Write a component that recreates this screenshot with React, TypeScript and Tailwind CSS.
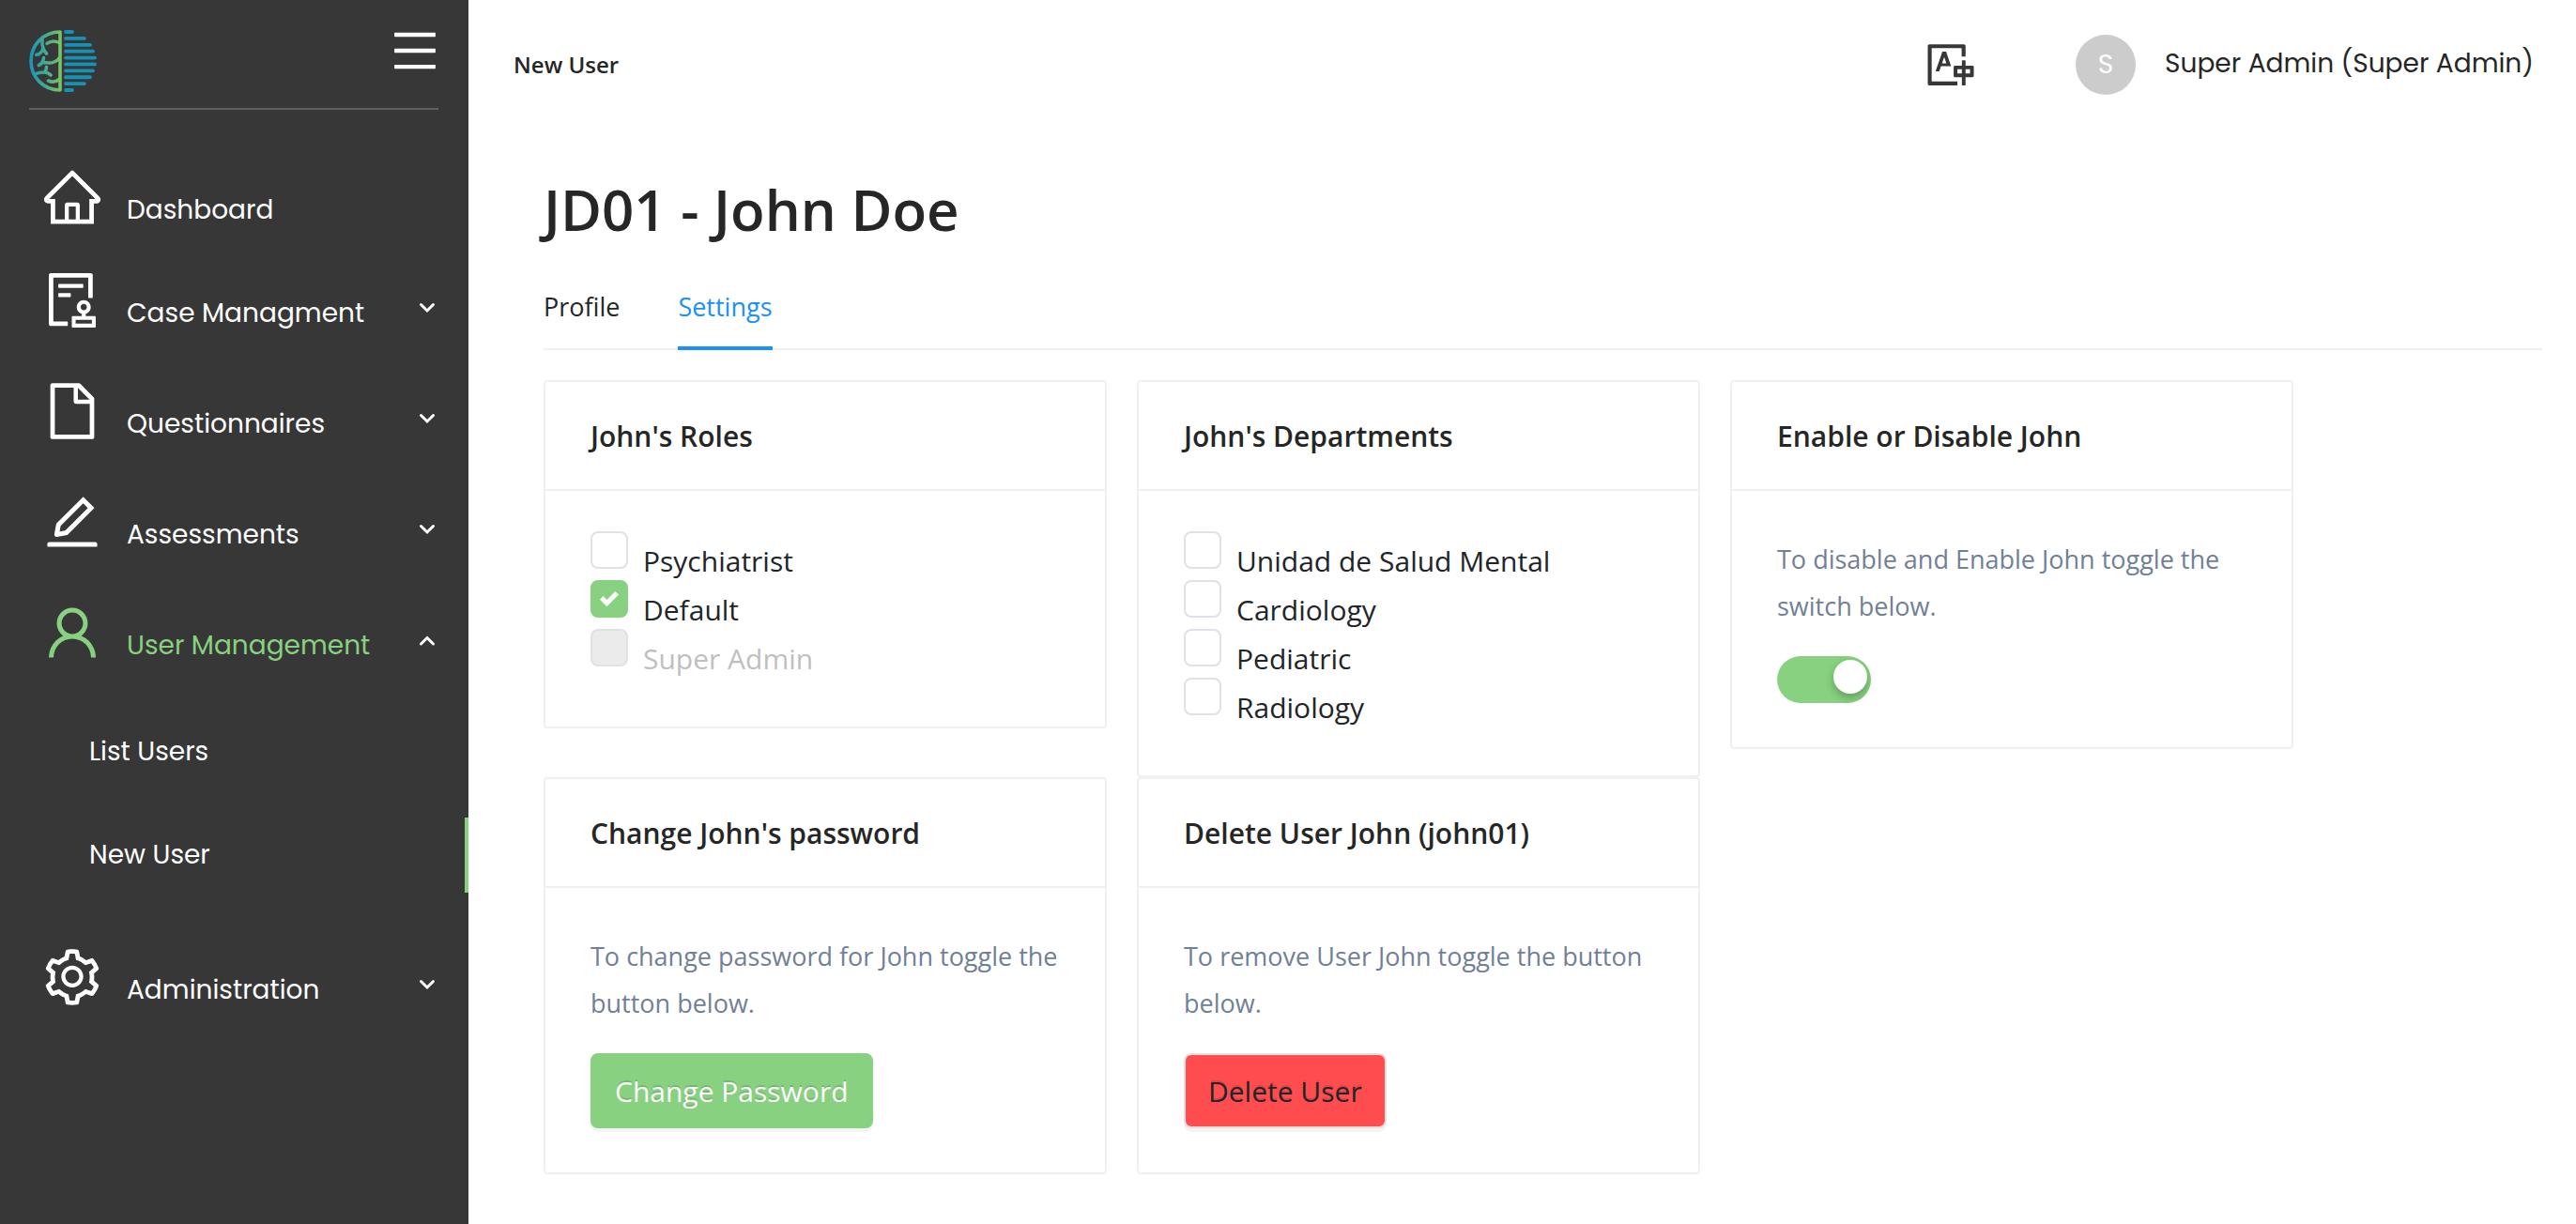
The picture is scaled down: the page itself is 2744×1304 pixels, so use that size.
import React, { useId, useState } from "react";
import {
  AiOutlineAudit,
  AiOutlineEdit,
  AiOutlineFile,
  AiOutlineHome,
  AiOutlineMenu,
  AiOutlineSetting,
  AiOutlineTranslation,
  AiOutlineUser,
} from "react-icons/ai";
import type { IconType } from "react-icons";

const LOGO_BARS = [59, 72, 78, 81, 83, 83, 81, 78, 72, 59];

function Logo() {
  return (
    <svg viewBox="11 12 72 66" className="h-[66px] w-[72px]" role="img" aria-label="Logo">
      <defs>
        <linearGradient id="brain" gradientUnits="userSpaceOnUse" x1="11" y1="0" x2="46" y2="0">
          <stop offset="0" stopColor="#1792b8" />
          <stop offset="0.5" stopColor="#44ab92" />
          <stop offset="1" stopColor="#7cc563" />
        </linearGradient>
      </defs>
      <g fill="none" stroke="url(#brain)" strokeWidth="3.6" strokeLinecap="round" strokeLinejoin="round">
        <path d="M44 14C26 14 13 28 13 45S26 76 44 76Z" />
        <path d="M25 21.5C24.5 26 25 29 26 31.5C25 35 22 38 18.8 38.4M26 31.5C27 34.500 28.500 35.500 29.500 37.200" />
        <path d="M30 26.300C34 23.500 39 23.500 43 25.500" />
        <path d="M21.300 49.500C25 48 26 46 26.500 41.500M25.500 46C32 48 39 47 43 42" />
        <path d="M17 59.500C20 57 24 57 27 57C30 57 32 58 34 60M27.500 57C29 55 29.500 53 29.500 51.300" />
        <path d="M31.500 66C36 68 40 67 43 64.500" />
      </g>
      <g stroke="#1592b5" strokeWidth="3.8" strokeLinecap="round">
        {LOGO_BARS.map((end, i) => (
          <line key={i} x1="50" x2={end - 2} y1={14 + i * 6.89} y2={14 + i * 6.89} />
        ))}
      </g>
    </svg>
  );
}

function Chevron({ up = false }: { up?: boolean }) {
  return (
    <svg
      viewBox="0 0 20 20"
      className="mb-4 ml-auto size-5"
      fill="none"
      stroke="#fff"
      strokeWidth="3"
      strokeLinecap="round"
      aria-hidden="true"
    >
      <path d={up ? "M3.500 14L10 7.500L16.500 14" : "M3.500 6.500L10 13L16.500 6.500"} />
    </svg>
  );
}

type NavItemProps = {
  icon: IconType;
  label: string;
  expandable?: boolean;
  open?: boolean;
};

function NavItem({ icon: Icon, label, expandable, open }: NavItemProps) {
  return (
    <button
      type="button"
      aria-expanded={expandable ? !!open : undefined}
      className={`flex w-full items-end pr-[34px] pl-[43px] text-left ${open ? "text-[#88d181]" : "text-white"}`}
    >
      <Icon className="size-[68px] shrink-0" />
      <span className="ml-6 leading-[40px]">{label}</span>
      {expandable && <Chevron up={open} />}
    </button>
  );
}

function Sidebar() {
  return (
    <aside className="w-[499px] shrink-0 bg-[#373737] font-[Poppins,Inter,sans-serif] text-[28px] text-white">
      <div className="mr-8 ml-[31px] flex items-start justify-between border-b-2 border-[#5f5f5f] pt-[26px] pb-[17px]">
        <div className="pt-1.5">
          <Logo />
        </div>
        <button type="button" aria-label="Toggle menu" className="-mr-[3px]">
          <AiOutlineMenu className="size-14" />
        </button>
      </div>
      <nav className="pt-[59px]">
        <ul>
          <li className="mb-[42px]">
            <NavItem icon={AiOutlineHome} label="Dashboard" />
          </li>
          <li className="mb-[50px]">
            <NavItem icon={AiOutlineAudit} label="Case Managment" expandable />
          </li>
          <li className="mb-[50px]">
            <NavItem icon={AiOutlineFile} label="Questionnaires" expandable />
          </li>
          <li className="mb-[50px]">
            <NavItem icon={AiOutlineEdit} label="Assessments" expandable />
          </li>
          <li className="mb-14">
            <NavItem icon={AiOutlineUser} label="User Management" expandable open />
            <ul className="mt-[53px] flex flex-col gap-[30px]">
              <li>
                <a href="#list-users" className="block pl-[95px] leading-[80px]">
                  List Users
                </a>
              </li>
              <li>
                <a
                  href="#new-user"
                  aria-current="page"
                  className="block border-r-4 border-[#88d181] pl-[95px] leading-[80px]"
                >
                  New User
                </a>
              </li>
            </ul>
          </li>
          <li>
            <NavItem icon={AiOutlineSetting} label="Administration" expandable />
          </li>
        </ul>
      </nav>
    </aside>
  );
}

function Header() {
  return (
    <header className="flex h-[138px] items-center pr-[45px] pl-12">
      <span className="text-[24px] font-semibold">New User</span>
      <button type="button" aria-label="Change language" className="ml-auto text-[#373737]">
        <AiOutlineTranslation className="size-14" />
      </button>
      <div className="ml-[105px] flex items-center gap-[31px] font-[Poppins,Inter,sans-serif] text-[28px]">
        <span className="flex size-16 items-center justify-center rounded-full bg-[#ccc] text-white">S</span>
        <span className="pb-0.5">Super Admin (Super Admin)</span>
      </div>
    </header>
  );
}

function Card({ title, children }: { title: string; children: React.ReactNode }) {
  return (
    <section className="rounded-sm border-2 border-[#f0f0f0]">
      <h2 className="border-b-2 border-[#f0f0f0] px-12 pt-0.5 text-[30px] leading-[112px] font-semibold">{title}</h2>
      {children}
    </section>
  );
}

type Option = { label: string; checked?: boolean; disabled?: boolean };

function OptionList({ options }: { options: Option[] }) {
  return (
    <div className="px-12 pt-[43px] pb-[52px] text-[30px] text-[#212529]">
      {options.map((option) => (
        <CheckRow key={option.label} {...option} />
      ))}
    </div>
  );
}

function CheckRow({ label, checked = false, disabled }: Option) {
  const id = useId();
  const [on, setOn] = useState(checked);
  return (
    <div className="flex h-[52px]">
      <span className="grid size-10 shrink-0 place-items-center">
        <input
          id={id}
          type="checkbox"
          checked={on}
          disabled={disabled}
          onChange={(e) => setOn(e.target.checked)}
          className="peer col-start-1 row-start-1 size-10 appearance-none rounded-lg border-2 border-[#dee2e6] bg-white checked:border-[#88d181] checked:bg-[#88d181] disabled:bg-[#ebebeb]"
        />
        <svg
          viewBox="0 0 8 8"
          className="pointer-events-none col-start-1 row-start-1 hidden size-5 peer-checked:block"
          fill="#fff"
          aria-hidden="true"
        >
          <path d="M6.564.75l-3.590 3.612-1.538-1.550L0 4.260 2.974 7.250 8 2.193z" />
        </svg>
      </span>
      <label htmlFor={id} className={`ml-4 self-end leading-[40px] ${disabled ? "text-[#bfbfbf]" : ""}`}>
        {label}
      </label>
    </div>
  );
}

function ActionBody({ text, children }: { text: string; children: React.ReactNode }) {
  return (
    <div className="px-12 pt-12 pb-[47px]">
      <p className="mb-7 text-[27px] leading-[50px] text-[#718096]">{text}</p>
      {children}
    </div>
  );
}

function Switch({ label }: { label: string }) {
  const [on, setOn] = useState(true);
  return (
    <input
      type="checkbox"
      role="switch"
      aria-label={label}
      checked={on}
      onChange={(e) => setOn(e.target.checked)}
      className="flex h-[50px] w-[100px] appearance-none rounded-full bg-gray-300 p-1 before:size-9 before:rounded-full before:bg-white before:shadow-[0_4px_8px_rgba(0,35,11,0.3)] checked:justify-end checked:bg-[#88d181]"
    />
  );
}

export default function App() {
  return (
    <div className="flex min-h-screen bg-white font-['Open_Sans','Noto_Sans',sans-serif] text-[#262626]">
      <Sidebar />
      <div className="min-w-0 flex-1">
        <Header />
        <main className="pt-12 pr-9 pb-12 pl-20">
          <h1 className="mb-[45px] text-[60px] leading-[74px] font-semibold">JD01 - John Doe</h1>
          <div role="tablist" className="mb-8 flex gap-[62px] border-b-2 border-[#f0f0f0] text-[27px] leading-[44px]">
            <button type="button" role="tab" aria-selected="false" className="pb-[22px]">
              Profile
            </button>
            <button
              type="button"
              role="tab"
              aria-selected="true"
              className="-mb-0.5 border-b-4 border-[#1890ff] pb-5 text-[#1890ff]"
            >
              Settings
            </button>
          </div>
          <div className="grid grid-cols-[repeat(auto-fill,600px)] items-start gap-x-8">
            <Card title="John's Roles">
              <OptionList
                options={[
                  { label: "Psychiatrist" },
                  { label: "Default", checked: true },
                  { label: "Super Admin", disabled: true },
                ]}
              />
            </Card>
            <Card title="John's Departments">
              <OptionList
                options={[
                  { label: "Unidad de Salud Mental" },
                  { label: "Cardiology" },
                  { label: "Pediatric" },
                  { label: "Radiology" },
                ]}
              />
            </Card>
            <Card title="Enable or Disable John">
              <ActionBody text="To disable and Enable John toggle the switch below.">
                <Switch label="Enable John" />
              </ActionBody>
            </Card>
            <Card title="Change John's password">
              <ActionBody text="To change password for John toggle the button below.">
                <button
                  type="button"
                  className="block h-20 rounded-lg border-2 border-[#88d181] bg-[#88d181] px-6 text-[30px] text-white shadow-[0_4px_0_rgba(0,0,0,0.045)] [text-shadow:0_-2px_0_rgba(0,0,0,0.12)]"
                >
                  Change Password
                </button>
              </ActionBody>
            </Card>
            <Card title="Delete User John (john01)">
              <ActionBody text="To remove User John toggle the button below.">
                <button
                  type="button"
                  className="block h-20 rounded-lg border-2 border-[#dee2e6] bg-[#ff4d4f] px-6 text-[30px] text-[#212529] shadow-[0_4px_0_rgba(0,0,0,0.045)] [text-shadow:0_-2px_0_rgba(0,0,0,0.12)]"
                >
                  Delete User
                </button>
              </ActionBody>
            </Card>
          </div>
        </main>
      </div>
    </div>
  );
}
